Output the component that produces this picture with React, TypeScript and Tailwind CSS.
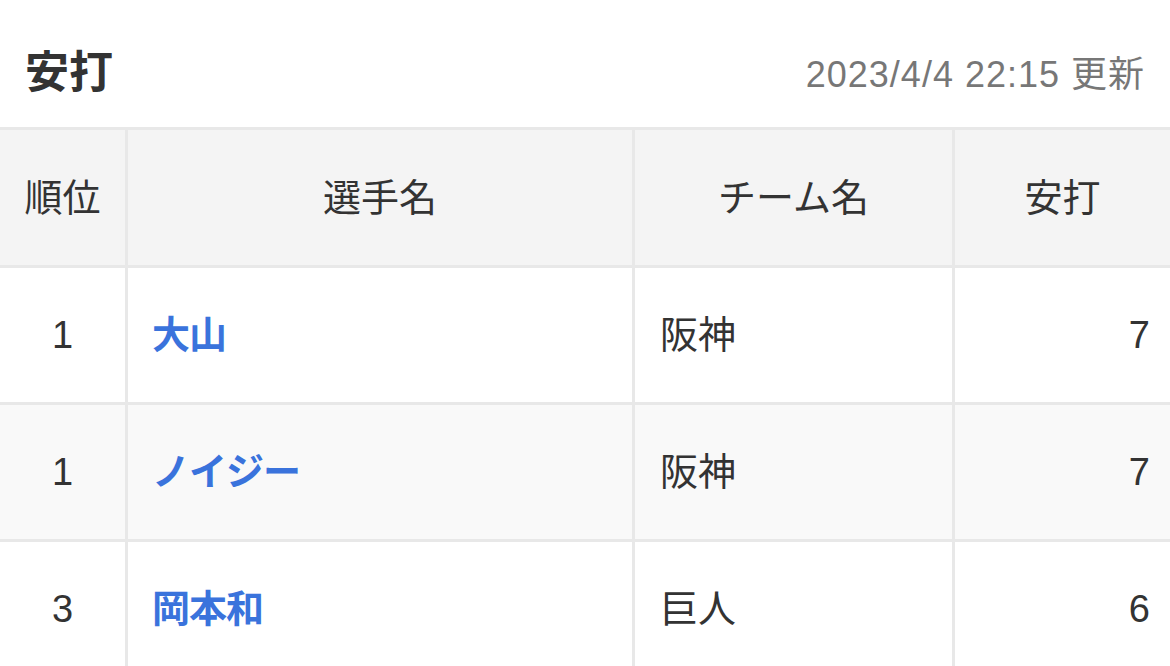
const rows = [
  { rank: "1", name: "大山", team: "阪神", hits: "7" },
  { rank: "1", name: "ノイジー", team: "阪神", hits: "7" },
  { rank: "3", name: "岡本和", team: "巨人", hits: "6" },
];

const font = { fontFamily: '"Liberation Sans", "Noto Sans CJK JP", sans-serif' };

export default function App() {
  return (
    <div className="min-h-screen bg-white text-[#333]" style={font}>
      <div className="flex h-[127px] items-center justify-between pl-[25px] pr-[25px]">
        <h1 className="pt-[18px] text-[44px] font-bold leading-none">安打</h1>
        <span className="pt-[22px] text-[36px] leading-none tracking-[1px] text-[#777]">2023/4/4 22:15 更新</span>
      </div>

      <div className="grid grid-cols-[125px_504px_317px_1fr] gap-[3px] bg-[#e8e8e8] pt-[3px] text-[38px] leading-none">
        <div className="flex h-[135px] items-center justify-center bg-[#f4f4f4]">順位</div>
        <div className="flex h-[135px] items-center justify-center bg-[#f4f4f4]">選手名</div>
        <div className="flex h-[135px] items-center justify-center bg-[#f4f4f4]">チーム名</div>
        <div className="flex h-[135px] items-center justify-center bg-[#f4f4f4]">安打</div>

        {rows.map((r, i) => {
          const bg = i % 2 === 1 ? "bg-[#f9f9f9]" : "bg-white";
          return [
            <div key={`r${i}`} className={`flex h-[134px] items-center justify-center ${bg}`}>{r.rank}</div>,
            <div key={`n${i}`} className={`flex h-[134px] items-center pl-[24px] font-bold tracking-[-1px] text-[#3a73dc] ${bg}`}>{r.name}</div>,
            <div key={`t${i}`} className={`flex h-[134px] items-center pl-[25px] ${bg}`}>{r.team}</div>,
            <div key={`h${i}`} className={`flex h-[134px] items-center justify-end pr-[20px] ${bg}`}>{r.hits}</div>,
          ];
        })}
      </div>
    </div>
  );
}
